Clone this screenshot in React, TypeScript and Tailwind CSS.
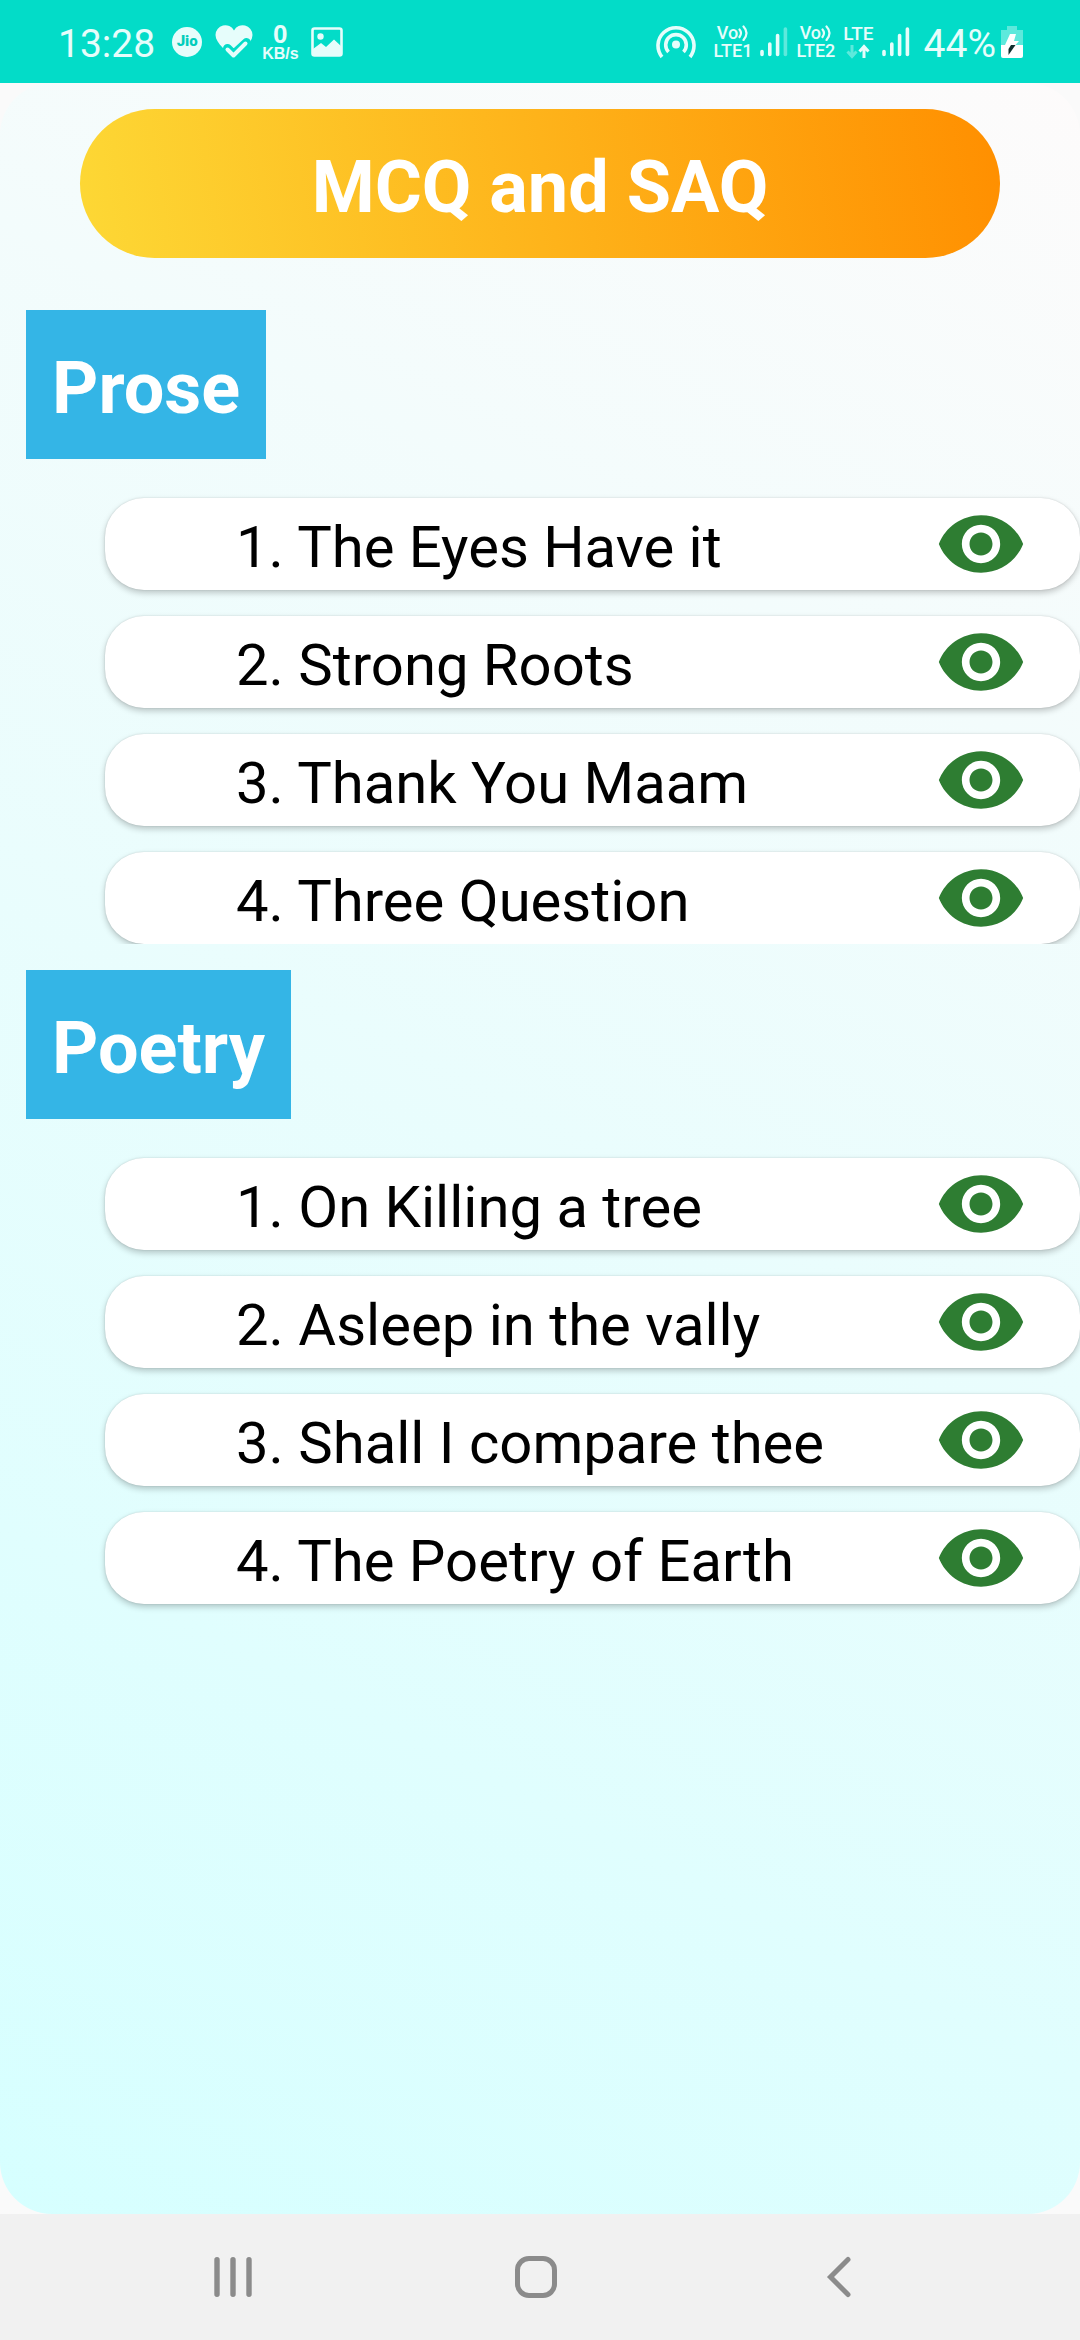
import React from "react";

const prose = ["The Eyes Have it", "Strong Roots", "Thank You Maam", "Three Question"];
const poetry = ["On Killing a tree", "Asleep in the vally", "Shall I compare thee", "The Poetry of Earth"];

function SignalBars({ weak = false }: { weak?: boolean }) {
  return (
    <svg width="28" height="31" viewBox="0 0 28 31" aria-hidden="true" stroke="currentColor" strokeWidth="3.6" strokeLinecap="round">
      <path d="M2 25.5V28.5M9.8 18V28.5M17.6 9.5V28.5" />
      <path d="M25.4 3V28.5" opacity={weak ? 0.4 : 1} />
    </svg>
  );
}

function VoLte({ slot }: { slot: number }) {
  return (
    <div className="flex flex-col items-center text-[18px] font-medium leading-[18px]">
      <div className="flex items-center">
        <span>Vo</span>
        <svg width="11" height="16" viewBox="0 0 11 16" fill="none" aria-hidden="true" stroke="currentColor" strokeWidth="2.2" strokeLinecap="round">
          <path d="M1.500 4.500Q4.500 8 1.500 12M5.500 1.500Q11.500 8 5.500 15" />
        </svg>
      </div>
      <span>LTE{slot}</span>
    </div>
  );
}

function StatusBar() {
  return (
    <header className="flex h-[83px] items-center justify-between bg-[#03dcc8] pl-[58px] pr-[57px] text-[#e6fdfb]">
      <div className="flex items-center">
        <time className="pt-1 text-[39px] leading-[46px]">13:28</time>
        <span className="ml-[17px] flex size-[30px] items-center justify-center rounded-full bg-[#e6fdfb] text-[15px] font-black leading-none text-[#03cdbb]">
          Jio
        </span>
        <svg className="ml-3" width="40" height="36" viewBox="0 0 40 36" aria-hidden="true">
          <path d="M20 34C14 28 1.500 19.500 1.500 11A9.800 9.800 0 0 1 20 6.500A9.800 9.800 0 0 1 38.500 11C38.500 19.500 26 28 20 34Z" fill="currentColor" />
          <path d="M13.500 24.500L19.500 30.500L32.500 18.500" fill="none" stroke="#03dcc8" strokeWidth="9" strokeLinecap="round" strokeLinejoin="round" />
          <path d="M13.500 25.500L19.500 31.500L31.500 19.500" fill="none" stroke="currentColor" strokeWidth="4" strokeLinecap="round" strokeLinejoin="round" />
        </svg>
        <div className="ml-2 flex flex-col items-center font-['Liberation_Sans',sans-serif] font-bold">
          <span className="text-[26px] leading-[24px]">0</span>
          <span className="text-[16px] leading-[16px]">KB/s</span>
        </div>
        <svg className="ml-3" width="32" height="30" viewBox="0 0 32 30" aria-hidden="true">
          <rect x="1.500" y="1.500" width="29" height="27" rx="2" fill="none" stroke="currentColor" strokeWidth="2.600" />
          <circle cx="9.500" cy="9.500" r="3.200" fill="currentColor" />
          <path d="M2 22L10 16L15 20L23 12.500L30 19V28H2Z" fill="currentColor" />
        </svg>
      </div>

      <div className="flex items-center">
        <svg width="40" height="35" viewBox="0 0 40 35" fill="none" aria-hidden="true" stroke="currentColor" strokeWidth="3.600">
          <path d="M6 33A18 18 0 1 1 34 33" />
          <path d="M12.500 28A10.300 10.300 0 1 1 27.500 28" />
          <circle cx="20" cy="20.500" r="4" fill="currentColor" stroke="none" />
        </svg>
        <div className="ml-[18px] flex items-center gap-2">
          <VoLte slot={1} />
          <SignalBars weak />
          <VoLte slot={2} />
          <div className="flex flex-col items-center text-[19px] font-medium leading-[20px]">
            <span>LTE</span>
            <svg width="24" height="15" viewBox="0 0 24 15" fill="none" aria-hidden="true" stroke="currentColor" strokeWidth="3">
              <path d="M6 1V12M1.500 7.500L6 12.500L10.500 7.500" opacity="0.4" />
              <path d="M18 14V3M13.500 7.500L18 2.500L22.500 7.500" />
            </svg>
          </div>
          <SignalBars />
        </div>
        <span className="ml-[14px] pt-1 text-[39px] leading-[46px]">44%</span>
        <svg className="ml-[5px]" width="22" height="34" viewBox="0 0 22 34" aria-hidden="true">
          <path d="M6 1H16V5H22V20H0V5H6Z" fill="currentColor" opacity="0.4" />
          <path d="M0 20H22V31Q22 33 20 33H2Q0 33 0 31Z" fill="#ffffff" />
          <path d="M9 9H15L13 16H18L14.500 20H4Z" fill="#ffffff" />
          <path d="M10 20H14.500L7.500 30V24Z" fill="#10302e" />
        </svg>
      </div>
    </header>
  );
}

function Section({ title, items }: { title: string; items: string[] }) {
  return (
    <section className="flex flex-col items-start">
      <h2 className="ml-[26px] bg-[#34b5e6] px-[26px] pb-[27px] pt-[35px] text-[72px] font-bold leading-[87px] text-white">
        {title}
      </h2>
      <ol className="flex w-full flex-col gap-[26px] overflow-hidden pl-[105px] pt-[39px]">
        {items.map((item, i) => (
          <li
            key={item}
            className="flex h-[92px] items-center justify-between rounded-[39px] bg-white pl-[131px] pr-[53px] shadow-[0_3px_6px_rgba(0,0,0,0.22),0_0_2px_rgba(0,0,0,0.14)]"
          >
            <span className="pt-[6px] text-[58px] leading-[68px] text-black">
              {i + 1}. {item}
            </span>
            <button type="button" aria-label={`View ${item}`} className="shrink-0">
              <svg width="92" height="92" viewBox="0 0 24 24" fill="#2e7d32" aria-hidden="true">
                <path d="M12 4.500C7 4.500 2.730 7.610 1 12c1.730 4.390 6 7.500 11 7.500s9.270-3.110 11-7.500c-1.730-4.390-6-7.500-11-7.500zM12 17c-2.760 0-5-2.240-5-5s2.240-5 5-5 5 2.240 5 5-2.240 5-5 5zm0-8c-1.660 0-3 1.340-3 3s1.340 3 3 3 3-1.340 3-3-1.340-3-3-3z" />
              </svg>
            </button>
          </li>
        ))}
      </ol>
    </section>
  );
}

function NavigationBar() {
  return (
    <nav className="grid h-[126px] grid-cols-3 bg-[#f1f1f1] pl-[82px] pr-[90px] text-[#8b8b8b]">
      <button type="button" aria-label="Recent apps" className="flex items-center justify-center">
        <svg width="44" height="44" viewBox="0 0 44 44" fill="none" stroke="currentColor" strokeWidth="5.400" strokeLinecap="round">
          <path d="M6 4.700V39.300M22 4.700V39.300M38 4.700V39.300" />
        </svg>
      </button>
      <button type="button" aria-label="Home" className="flex items-center justify-center">
        <svg width="44" height="44" viewBox="0 0 44 44" fill="none" stroke="currentColor" strokeWidth="5">
          <rect x="3.500" y="3.500" width="37" height="37" rx="11.500" />
        </svg>
      </button>
      <button type="button" aria-label="Back" className="flex items-center justify-center">
        <svg width="44" height="44" viewBox="0 0 44 44" fill="none" stroke="currentColor" strokeWidth="5" strokeLinecap="round">
          <path d="M31 4.500L13.500 22L31 39.500" />
        </svg>
      </button>
    </nav>
  );
}

export default function App() {
  return (
    <div className="flex min-h-screen flex-col bg-[#fafafa] font-[Roboto,sans-serif]">
      <StatusBar />
      <main className="flex flex-1 flex-col rounded-[52px] bg-[linear-gradient(27deg,#d6ffff_0%,#fdfbfb_100%)] pt-[26px]">
        <h1 className="mx-20 rounded-full bg-[linear-gradient(81deg,#fdd835_0%,#ff8f00_100%)] pb-[27px] pt-[35px] text-center text-[72px] font-bold leading-[87px] text-white">
          MCQ and SAQ
        </h1>
        <div className="mt-[52px] flex flex-col gap-[26px]">
          <Section title="Prose" items={prose} />
          <div className="[&_ol]:overflow-visible">
            <Section title="Poetry" items={poetry} />
          </div>
        </div>
      </main>
      <NavigationBar />
    </div>
  );
}
